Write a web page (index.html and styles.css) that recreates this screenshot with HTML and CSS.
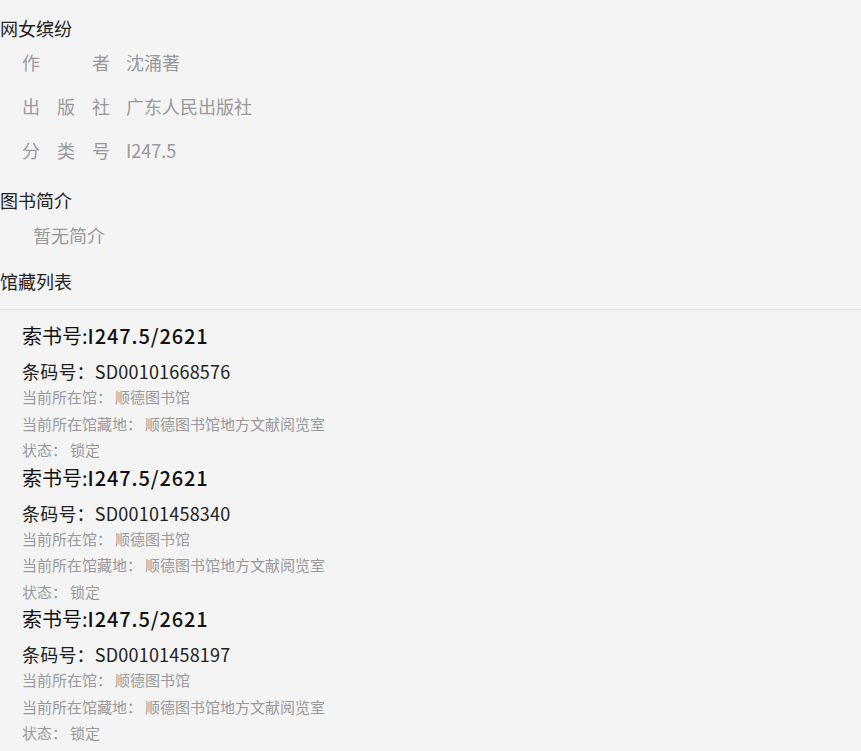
FILE: index.html
```html
<!DOCTYPE html>
<html lang="zh-CN">
<head>
  <meta charset="UTF-8">
  <meta name="viewport" content="width=device-width, initial-scale=1.0">
  <title>图书详情</title>
  <link rel="stylesheet" href="styles.css">
</head>
<body>
  <div class="book-detail">
    <div class="book-title">网女缤纷</div>
    <div class="info-list">
      <div class="info-row">
        <span class="info-label">作者</span>
        <span class="info-value">沈涌著</span>
      </div>
      <div class="info-row">
        <span class="info-label">出版社</span>
        <span class="info-value">广东人民出版社</span>
      </div>
      <div class="info-row">
        <span class="info-label">分类号</span>
        <span class="info-value">I247.5</span>
      </div>
    </div>

    <div class="section-title intro-title">图书简介</div>
    <div class="intro-text">暂无简介</div>

    <div class="section-title holdings-title">馆藏列表</div>
    <div class="holdings">
      <div class="holding">
        <div class="call-no">索书号:<span class="call-no-value">I247.5/2621</span></div>
        <div class="barcode">条码号：SD00101668576</div>
        <div class="meta">当前所在馆：<span class="meta-value">顺德图书馆</span></div>
        <div class="meta">当前所在馆藏地：<span class="meta-value">顺德图书馆地方文献阅览室</span></div>
        <div class="meta">状态：<span class="meta-value">锁定</span></div>
      </div>
      <div class="holding">
        <div class="call-no">索书号:<span class="call-no-value">I247.5/2621</span></div>
        <div class="barcode">条码号：SD00101458340</div>
        <div class="meta">当前所在馆：<span class="meta-value">顺德图书馆</span></div>
        <div class="meta">当前所在馆藏地：<span class="meta-value">顺德图书馆地方文献阅览室</span></div>
        <div class="meta">状态：<span class="meta-value">锁定</span></div>
      </div>
      <div class="holding">
        <div class="call-no">索书号:<span class="call-no-value">I247.5/2621</span></div>
        <div class="barcode">条码号：SD00101458197</div>
        <div class="meta">当前所在馆：<span class="meta-value">顺德图书馆</span></div>
        <div class="meta">当前所在馆藏地：<span class="meta-value">顺德图书馆地方文献阅览室</span></div>
        <div class="meta">状态：<span class="meta-value">锁定</span></div>
      </div>
    </div>
  </div>
</body>
</html>
```

FILE: styles.css
```css
body, html {
  margin: 0;
  padding: 0;
  background-color: #f4f4f4;
  font-family: "Microsoft YaHei", "Noto Sans CJK SC", sans-serif;
  color: #222;
}

.book-title {
  font-size: 18px;
  line-height: 24px;
  padding-top: 16px;
}

.info-list {
  padding-left: 22px;
}

.info-row {
  display: flex;
  font-size: 18px;
  line-height: 44px;
  color: #999;
}

.info-label {
  width: 88px;
  margin-right: 16px;
  text-align: justify;
  text-align-last: justify;
}

.section-title {
  font-size: 18px;
  line-height: 24px;
}

.intro-title {
  margin-top: 16px;
}

.intro-text {
  font-size: 18px;
  line-height: 24px;
  color: #999;
  margin-top: 11px;
  padding-left: 33px;
}

.holdings-title {
  margin-top: 22px;
  padding-bottom: 16px;
  border-bottom: 1px solid #e2e2e2;
}

.holdings {
  padding: 12px 22px 0;
}

.call-no {
  font-size: 20px;
  line-height: 28px;
  color: #111;
}

.call-no-value {
  font-weight: 500;
  letter-spacing: 0.9px;
}

.barcode {
  font-size: 18px;
  line-height: 26px;
  margin-top: 8px;
  letter-spacing: 0.2px;
}

.meta {
  font-size: 15px;
  line-height: 26.5px;
  color: #999;
}

.meta-value {
  margin-left: 3px;
}
```
